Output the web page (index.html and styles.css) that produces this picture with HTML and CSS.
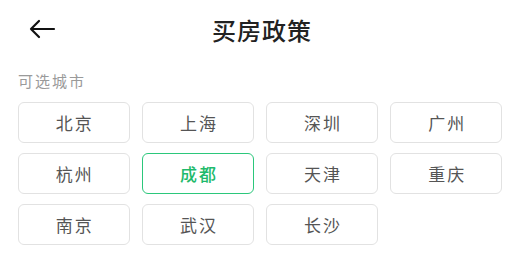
FILE: index.html
```html
<!DOCTYPE html>
<html lang="zh-CN">
<head>
  <meta charset="UTF-8" />
  <meta name="viewport" content="width=device-width, initial-scale=1" />
  <title>买房政策</title>
  <link rel="stylesheet" href="styles.css">
</head>
<body>

  <header class="top-bar">
    <button class="back-btn" aria-label="返回">
      <svg width="28" height="20" viewBox="0 0 28 20">
        <path d="M26 10H3M11 2L3 10L11 18" fill="none" stroke="#111" stroke-width="2.2" stroke-linecap="round" stroke-linejoin="round"/>
      </svg>
    </button>
    <h1 class="title">买房政策</h1>
  </header>

  <section class="cities">
    <div class="label">可选城市</div>
    <div class="city-grid">
      <div class="city">北京</div>
      <div class="city">上海</div>
      <div class="city">深圳</div>
      <div class="city">广州</div>
      <div class="city">杭州</div>
      <div class="city active">成都</div>
      <div class="city">天津</div>
      <div class="city">重庆</div>
      <div class="city">南京</div>
      <div class="city">武汉</div>
      <div class="city">长沙</div>
    </div>
  </section>

</body>
</html>
```

FILE: styles.css
```css
* {
  margin: 0;
  padding: 0;
  box-sizing: border-box;
}

body {
  font-family: "Noto Sans CJK SC", "Noto Sans", sans-serif;
  background: #fff;
  color: #222;
  width: 523px;
}

/* 顶部栏 */
.top-bar {
  position: relative;
  height: 58px;
  display: flex;
  align-items: center;
  justify-content: center;
}

.back-btn {
  position: absolute;
  left: 28px;
  top: 19px;
  border: none;
  background: none;
  display: flex;
}

.title {
  font-size: 24px;
  font-weight: 500;
  letter-spacing: 1px;
  color: #222;
  margin-left: 1px;
}

/* 城市 */
.cities {
  padding: 0 21px 0 18px;
}

.label {
  font-size: 15px;
  line-height: 20px;
  color: #9a9a9a;
  margin-top: 13px;
  letter-spacing: 2px;
}

.city-grid {
  display: grid;
  grid-template-columns: repeat(4, 1fr);
  column-gap: 12.5px;
  row-gap: 10px;
  margin-top: 11px;
}

.city {
  height: 41px;
  border: 1.5px solid #e2e2e2;
  border-radius: 6px;
  display: flex;
  align-items: center;
  justify-content: center;
  font-size: 17px;
  color: #555;
  letter-spacing: 2px;
  padding-left: 2px;
}

.city.active {
  border-color: #2bc77b;
  color: #1fba6c;
  font-weight: 500;
}
```
